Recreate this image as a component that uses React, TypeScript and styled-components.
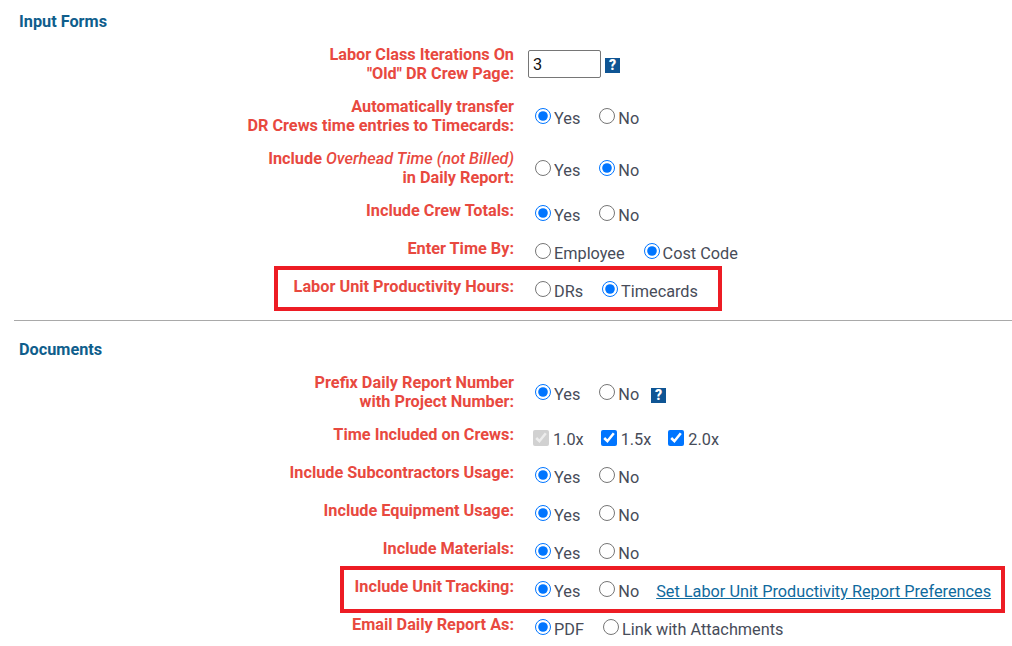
import React from "react";
import styled, { createGlobalStyle } from "styled-components";

const GlobalStyle = createGlobalStyle`
  html, body {
    margin: 0;
    padding: 0;
    background: #fff;
    font-family: Roboto, "Liberation Sans", sans-serif;
  }
`;

const Page = styled.div`
  width: 1012px;
  height: 646px;
  overflow: hidden;
  padding-top: 12px;
  box-sizing: border-box;
`;

const SectionTitle = styled.h3`
  margin: 0 0 14px 19px;
  font-size: 16.27px;
  line-height: 19px;
  font-weight: 700;
  color: #0f5e8c;
`;

const Divider = styled.hr`
  margin: 5px 0 19px 14px;
  border: 0;
  height: 1px;
  background: #a9a9a9;
`;

const Row = styled.div<{ $tall?: boolean }>`
  position: relative;
  display: flex;
  align-items: flex-start;
  height: ${props => (props.$tall ? 52 : 38)}px;
`;

const Label = styled.div`
  width: 514px;
  flex: none;
  text-align: right;
  font-size: 16.27px;
  line-height: 19px;
  font-weight: 700;
  color: #e8493f;

  em {
    font-weight: 500;
  }
`;

const Controls = styled.div<{ $top?: number; $left?: number }>`
  display: flex;
  align-items: center;
  height: 28px;
  margin-top: ${props => props.$top ?? 0}px;
  margin-left: ${props => props.$left ?? 21}px;
`;

const Option = styled.label<{ $gap?: number }>`
  display: inline-flex;
  align-items: center;
  margin-right: ${props => props.$gap ?? 19}px;
  padding-top: 1px;
  font-size: 16.27px;
  color: #474c59;
`;

const Radio = styled.input.attrs({ type: "radio" })`
  width: 16px;
  height: 16px;
  margin: -5px 3px 0 0;
`;

const Check = styled.input.attrs({ type: "checkbox" })`
  width: 16px;
  height: 16px;
  margin: -3px 4px 0 0;
`;

const NumberInput = styled.input`
  width: 73px;
  height: 28px;
  box-sizing: border-box;
  margin: 0 4px 0 -7px;
  padding: 0 4px;
  border: 1px solid #767676;
  border-radius: 2px;
  font-family: Roboto, sans-serif;
  font-size: 16.27px;
  color: #111;
`;

const HelpIcon = styled.span<{ $shift?: number }>`
  display: inline-flex;
  align-items: center;
  justify-content: center;
  width: 15px;
  height: 15px;
  margin-top: 3px;
  margin-left: ${props => props.$shift ?? 0}px;
  background: #0f5594;
  color: #fff;
  font-size: 14px;
  font-weight: 900;
  line-height: 15px;
`;

const ReportLink = styled.a`
  margin-left: -2px;
  padding-top: 1px;
  font-size: 16.27px;
  color: #0f6a9e;
  text-decoration: underline;
`;

const Highlight = styled.div<{ $left: number; $width: number; $height: number }>`
  position: absolute;
  top: -11px;
  left: ${props => props.$left}px;
  width: ${props => props.$width}px;
  height: ${props => props.$height}px;
  box-sizing: border-box;
  border: 4px solid #ed1c24;
  pointer-events: none;
`;

interface IChoice {
  text: string;
  checked?: boolean;
}

const Choices: React.FC<{ name: string; options: IChoice[]; gap?: number }> = ({ name, options, gap }) => (
  <>
    {options.map(({ text, checked }) => (
      <Option key={text} $gap={gap}>
        <Radio name={name} defaultChecked={checked} />
        {text}
      </Option>
    ))}
  </>
);

const yes = [{ text: "Yes", checked: true }, { text: "No" }];
const no = [{ text: "Yes" }, { text: "No", checked: true }];

const App: React.FC = () => (
  <Page>
    <GlobalStyle />
    <SectionTitle>Input Forms</SectionTitle>
    <Row $tall>
      <Label>
        Labor Class Iterations On
        <br />
        "Old" DR Crew Page:
      </Label>
      <Controls $top={5}>
        <NumberInput defaultValue="3" />
        <HelpIcon>?</HelpIcon>
      </Controls>
    </Row>
    <Row $tall>
      <Label>
        Automatically transfer
        <br />
        DR Crews time entries to Timecards:
      </Label>
      <Controls $top={7}>
        <Choices name="transfer" options={yes} />
      </Controls>
    </Row>
    <Row $tall>
      <Label>
        Include <em>Overhead Time (not Billed)</em>
        <br />
        in Daily Report:
      </Label>
      <Controls $top={7}>
        <Choices name="overhead" options={no} />
      </Controls>
    </Row>
    <Row>
      <Label>Include Crew Totals:</Label>
      <Controls>
        <Choices name="totals" options={yes} />
      </Controls>
    </Row>
    <Row>
      <Label>Enter Time By:</Label>
      <Controls>
        <Choices name="timeBy" options={[{ text: "Employee" }, { text: "Cost Code", checked: true }]} />
      </Controls>
    </Row>
    <Row>
      <Label>Labor Unit Productivity Hours:</Label>
      <Controls>
        <Choices name="hours" options={[{ text: "DRs" }, { text: "Timecards", checked: true }]} />
      </Controls>
      <Highlight $left={274} $width={448} $height={45} />
    </Row>
    <Divider />
    <SectionTitle>Documents</SectionTitle>
    <Row $tall>
      <Label>
        Prefix Daily Report Number
        <br />
        with Project Number:
      </Label>
      <Controls $top={7}>
        <Choices name="prefix" options={yes} />
        <HelpIcon $shift={-7}>?</HelpIcon>
      </Controls>
    </Row>
    <Row>
      <Label>Time Included on Crews:</Label>
      <Controls $left={19}>
        <Option $gap={17}>
          <Check defaultChecked disabled />
          1.0x
        </Option>
        <Option $gap={17}>
          <Check defaultChecked />
          1.5x
        </Option>
        <Option $gap={17}>
          <Check defaultChecked />
          2.0x
        </Option>
      </Controls>
    </Row>
    <Row>
      <Label>Include Subcontractors Usage:</Label>
      <Controls>
        <Choices name="subs" options={yes} />
      </Controls>
    </Row>
    <Row>
      <Label>Include Equipment Usage:</Label>
      <Controls>
        <Choices name="equipment" options={yes} />
      </Controls>
    </Row>
    <Row>
      <Label>Include Materials:</Label>
      <Controls>
        <Choices name="materials" options={yes} />
      </Controls>
    </Row>
    <Row>
      <Label>Include Unit Tracking:</Label>
      <Controls>
        <Choices name="tracking" options={yes} />
        <ReportLink href="#">Set Labor Unit Productivity Report Preferences</ReportLink>
      </Controls>
      <Highlight $left={340} $width={665} $height={47} />
    </Row>
    <Row>
      <Label>Email Daily Report As:</Label>
      <Controls>
        <Choices name="emailAs" options={[{ text: "PDF", checked: true }, { text: "Link with Attachments" }]} />
      </Controls>
    </Row>
  </Page>
);

export default App;
